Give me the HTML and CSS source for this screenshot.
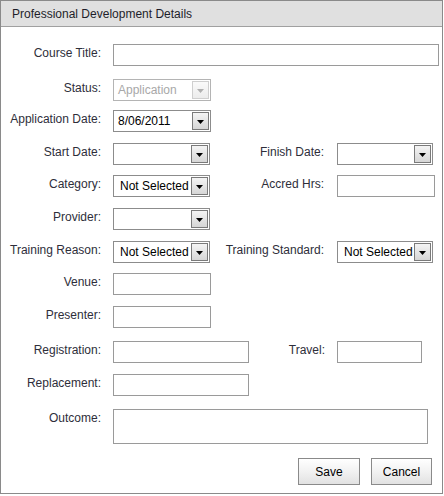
FILE: index.html
```html
<!DOCTYPE html>
<html>
<head>
<meta charset="utf-8">
<link rel="stylesheet" href="styles.css">
</head>
<body>
<div class="panel">
  <div class="header">Professional Development Details</div>
  <div class="form">
    <div class="row">
      <label class="lbl">Course Title:</label>
      <div class="input w-title"></div>
    </div>
    <div class="row gap-plus2">
      <label class="lbl">Status:</label>
      <div class="select disabled w-98"><span class="val">Application</span><span class="arrow"><svg width="7" height="4" viewBox="0 0 7 4"><path d="M0 0h7L3.5 4z"/></svg></span></div>
    </div>
    <div class="row gap-minus2">
      <label class="lbl">Application Date:</label>
      <div class="select w-98"><span class="val date">8/06/2011</span><span class="arrow"><svg width="7" height="4" viewBox="0 0 7 4"><path d="M0 0h7L3.5 4z"/></svg></span></div>
    </div>
    <div class="row">
      <label class="lbl">Start Date:</label>
      <div class="select w-97"><span class="val"></span><span class="arrow"><svg width="7" height="4" viewBox="0 0 7 4"><path d="M0 0h7L3.5 4z"/></svg></span></div>
      <label class="lbl2">Finish Date:</label>
      <div class="select w-96"><span class="val"></span><span class="arrow"><svg width="7" height="4" viewBox="0 0 7 4"><path d="M0 0h7L3.5 4z"/></svg></span></div>
    </div>
    <div class="row gap-minus1">
      <label class="lbl">Category:</label>
      <div class="select w-97"><span class="val">Not Selected</span><span class="arrow"><svg width="7" height="4" viewBox="0 0 7 4"><path d="M0 0h7L3.5 4z"/></svg></span></div>
      <label class="lbl2">Accred Hrs:</label>
      <div class="input w-98"></div>
    </div>
    <div class="row">
      <label class="lbl">Provider:</label>
      <div class="select w-97"><span class="val"></span><span class="arrow"><svg width="7" height="4" viewBox="0 0 7 4"><path d="M0 0h7L3.5 4z"/></svg></span></div>
    </div>
    <div class="row">
      <label class="lbl">Training Reason:</label>
      <div class="select w-97"><span class="val">Not Selected</span><span class="arrow"><svg width="7" height="4" viewBox="0 0 7 4"><path d="M0 0h7L3.5 4z"/></svg></span></div>
      <label class="lbl2">Training Standard:</label>
      <div class="select w-96"><span class="val">Not Selected</span><span class="arrow"><svg width="7" height="4" viewBox="0 0 7 4"><path d="M0 0h7L3.5 4z"/></svg></span></div>
    </div>
    <div class="row gap-minus1">
      <label class="lbl">Venue:</label>
      <div class="input w-98"></div>
    </div>
    <div class="row">
      <label class="lbl">Presenter:</label>
      <div class="input w-98"></div>
    </div>
    <div class="row gap-plus2">
      <label class="lbl">Registration:</label>
      <div class="input w-135"></div>
      <label class="lbl2 lbl2-travel">Travel:</label>
      <div class="input w-85"></div>
    </div>
    <div class="row">
      <label class="lbl">Replacement:</label>
      <div class="input w-135"></div>
    </div>
    <div class="row gap-plus2">
      <label class="lbl">Outcome:</label>
      <div class="input textarea"></div>
    </div>
    <div class="buttons">
      <button class="btn btn-save">Save</button>
      <button class="btn btn-cancel">Cancel</button>
    </div>
  </div>
</div>
</body>
</html>
```

FILE: styles.css
```css
html, body {
  margin: 0;
  padding: 0;
  background: #ffffff;
}

body {
  font-family: "Liberation Sans", Arial, sans-serif;
  font-size: 12px;
  color: #2e2e3a;
}

.panel {
  width: 443px;
  height: 494px;
  box-sizing: border-box;
  border: 1px solid #8a8a8a;
  background: #ffffff;
}

.header {
  height: 26px;
  box-sizing: border-box;
  background: #e0e0e0;
  border-bottom: 1px solid #a0a0a0;
  padding: 6px 0 0 11px;
  line-height: 14px;
  color: #1e1e2a;
}

.form {
  padding-top: 17px;
  display: flex;
  flex-direction: column;
  gap: 11px;
}

.row {
  display: grid;
  grid-template-columns: 112px 100px 124px 1fr;
  align-items: start;
  min-height: 22px;
}

.gap-plus2 { margin-top: 2px; }
.gap-minus2 { margin-top: -2px; }
.gap-minus1 { margin-top: -1px; }

.lbl, .lbl2 {
  text-align: right;
  padding-top: 2px;
  line-height: 14px;
  white-space: nowrap;
}

.lbl { padding-right: 12px; }
.lbl2 { padding-right: 13px; grid-column: 3; }
.lbl2-travel { padding-right: 12px; }

.input {
  height: 22px;
  box-sizing: border-box;
  border: 1px solid #9a9a9a;
  background: #ffffff;
}

.w-title { width: 326px; grid-column: 2 / 5; }
.w-98 { width: 98px; }
.w-97 { width: 97px; }
.w-96 { width: 96px; }
.w-135 { width: 136px; }
.w-85 { width: 85px; }

.textarea {
  width: 315px;
  height: 35px;
  grid-column: 2 / 5;
}

.select {
  height: 22px;
  box-sizing: border-box;
  border: 1px solid #8c8c8c;
  background: #ffffff;
  display: flex;
  align-items: stretch;
  overflow: hidden;
}

.select .val {
  flex: 1;
  min-width: 0;
  overflow: hidden;
  white-space: nowrap;
  padding-left: 6px;
  line-height: 20px;
  font-size: 12px;
  color: #000000;
}

.select .val.date { padding-left: 4px; }

.select .arrow {
  width: 17px;
  flex: none;
  box-sizing: border-box;
  margin: 1px 1px 1px 0;
  border: 1px solid #7a7a7a;
  background: linear-gradient(#f4f4f4, #d6d6d6);
  display: flex;
  align-items: center;
  justify-content: center;
  padding-top: 2px;
}

.select .arrow svg { fill: #000000; }

.select.disabled {
  border-color: #b4b4b4;
}

.select.disabled .val {
  color: #a8a8a8;
  padding-left: 4px;
}

.select.disabled .arrow {
  border-color: #cfcfcf;
  background: linear-gradient(#fafafa, #ececec);
}

.select.disabled .arrow svg { fill: #b0b0b0; }

.buttons {
  display: flex;
  justify-content: flex-end;
  gap: 11px;
  padding-right: 10px;
  margin-top: 3px;
}

.btn {
  height: 27px;
  box-sizing: border-box;
  border: 1px solid #8a8a8a;
  background: linear-gradient(#ffffff, #f3f3f3 45%, #e2e2e2);
  font-family: "Liberation Sans", Arial, sans-serif;
  font-size: 12px;
  color: #000000;
  padding: 0;
  border-radius: 0;
}

.btn-save { width: 62px; }
.btn-cancel { width: 61px; }
```
